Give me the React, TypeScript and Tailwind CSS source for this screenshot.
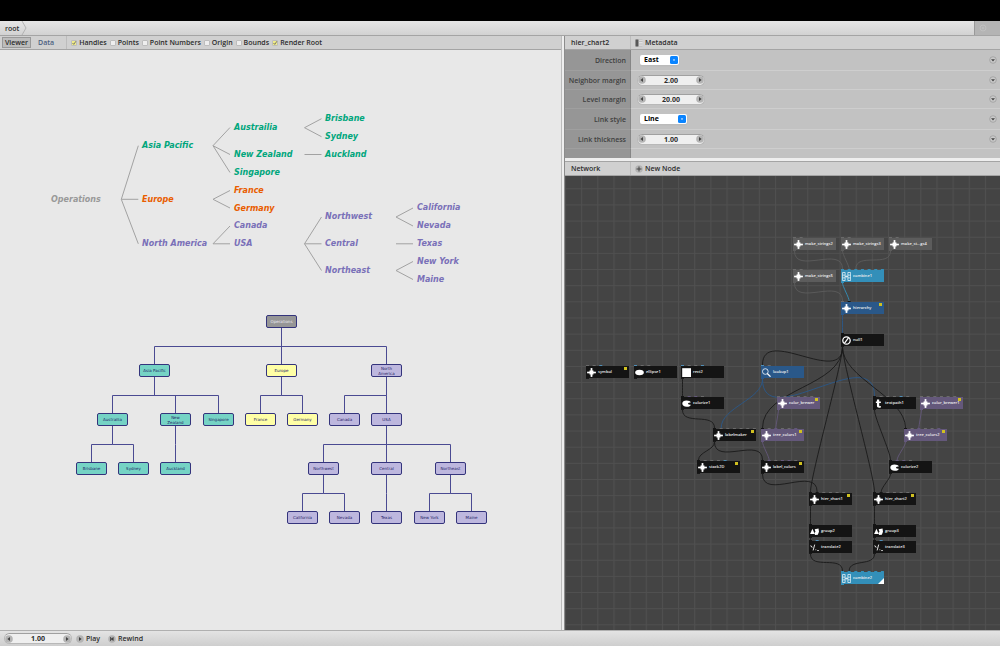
import { useState, type ReactNode } from "react";
import clsx from "clsx";

type Point = [number, number];

/* ---------- Viewer: horizontal hierarchy ---------- */

interface TreeLabel {
  text: string;
  x: number;
  y: number;
  color: string;
}

const GRAY = "text-[#999999]";
const GREEN = "text-[#00a67c]";
const ORANGE = "text-[#e85d00]";
const VIOLET = "text-[#7a70b8]";

const treeLabels: TreeLabel[] = [
  { text: "Operations", x: 51, y: 149, color: GRAY },
  { text: "Asia Pacific", x: 142, y: 95, color: GREEN },
  { text: "Europe", x: 142, y: 149, color: ORANGE },
  { text: "North America", x: 142, y: 193, color: VIOLET },
  { text: "Austrailia", x: 234, y: 77, color: GREEN },
  { text: "New Zealand", x: 234, y: 104, color: GREEN },
  { text: "Singapore", x: 234, y: 122, color: GREEN },
  { text: "France", x: 234, y: 140, color: ORANGE },
  { text: "Germany", x: 234, y: 158, color: ORANGE },
  { text: "Canada", x: 234, y: 175, color: VIOLET },
  { text: "USA", x: 234, y: 193, color: VIOLET },
  { text: "Brisbane", x: 325, y: 68, color: GREEN },
  { text: "Sydney", x: 325, y: 86, color: GREEN },
  { text: "Auckland", x: 325, y: 104, color: GREEN },
  { text: "Northwest", x: 325, y: 166, color: VIOLET },
  { text: "Central", x: 325, y: 193, color: VIOLET },
  { text: "Northeast", x: 325, y: 220, color: VIOLET },
  { text: "California", x: 417, y: 157, color: VIOLET },
  { text: "Nevada", x: 417, y: 175, color: VIOLET },
  { text: "Texas", x: 417, y: 193, color: VIOLET },
  { text: "New York", x: 417, y: 211, color: VIOLET },
  { text: "Maine", x: 417, y: 229, color: VIOLET },
];

const treeForks: { from: Point; to: number[] }[] = [
  { from: [121.3, 149.3], to: [95.7, 149.3, 193.8] },
  { from: [213, 95.7], to: [77.5, 104.5, 122.5] },
  { from: [213, 149.3], to: [140.5, 158] },
  { from: [213, 193.8], to: [176, 193.8] },
  { from: [304.5, 77.7], to: [68.7, 86.7] },
  { from: [304.5, 104.5], to: [104.5] },
  { from: [304.5, 193.8], to: [167, 193.8, 220.5] },
  { from: [396, 167], to: [158, 176] },
  { from: [396, 193.8], to: [193.8] },
  { from: [396, 220.5], to: [211.5, 229.5] },
];

/* ---------- Viewer: org chart ---------- */

interface OrgBox {
  text: string;
  x: number;
  level: number;
  fill: string;
  children?: number[];
}

const ROOT = "bg-[#969696] text-[#ececf4]";
const TEAL = "bg-[#75d3c5] text-[#1e1e66]";
const YELLOW = "bg-[#ffffa6] text-[#1e1e66]";
const LILAC = "bg-[#bdb7de] text-[#1e1e66]";

const orgBoxes: OrgBox[] = [
  { text: "Operations", x: 281, level: 0, fill: ROOT, children: [154, 281, 386] },
  { text: "Asia Pacific", x: 154, level: 1, fill: TEAL, children: [112, 175, 218] },
  { text: "Europe", x: 281, level: 1, fill: YELLOW, children: [260, 302] },
  { text: "North America", x: 386, level: 1, fill: LILAC, children: [344, 386] },
  { text: "Austrailia", x: 112, level: 2, fill: TEAL, children: [91, 133] },
  { text: "New Zealand", x: 175, level: 2, fill: TEAL, children: [175] },
  { text: "Singapore", x: 218, level: 2, fill: TEAL },
  { text: "France", x: 260, level: 2, fill: YELLOW },
  { text: "Germany", x: 302, level: 2, fill: YELLOW },
  { text: "Canada", x: 344, level: 2, fill: LILAC },
  { text: "USA", x: 386, level: 2, fill: LILAC, children: [323, 386, 450] },
  { text: "Brisbane", x: 91, level: 3, fill: TEAL },
  { text: "Sydney", x: 133, level: 3, fill: TEAL },
  { text: "Auckland", x: 175, level: 3, fill: TEAL },
  { text: "Northwest", x: 323, level: 3, fill: LILAC, children: [302, 344] },
  { text: "Central", x: 386, level: 3, fill: LILAC, children: [386] },
  { text: "Northeast", x: 450, level: 3, fill: LILAC, children: [429, 471] },
  { text: "California", x: 302, level: 4, fill: LILAC },
  { text: "Nevada", x: 344, level: 4, fill: LILAC },
  { text: "Texas", x: 386, level: 4, fill: LILAC },
  { text: "New York", x: 429, level: 4, fill: LILAC },
  { text: "Maine", x: 471, level: 4, fill: LILAC },
];

const levelTop = (level: number) => 265 + level * 49;

/* ---------- Network ---------- */

type IconName = "network" | "combine" | "null" | "ellipse" | "rect" | "search" | "colorize" | "text" | "group" | "translate";

interface NetNode {
  id: string;
  label?: string;
  x: number;
  y: number;
  icon: IconName;
  kind: "string" | "list" | "lookup" | "shape" | "color";
  // one letter per input: g = gray, b = blue, v = violet, k = black, c = cyan
  ports: string;
  sub?: boolean;
}

const kindFill: Record<NetNode["kind"], string> = {
  string: "bg-[#5c5c5c]",
  list: "bg-[#338fb9]",
  lookup: "bg-[#2a5889]",
  shape: "bg-[#141414]",
  color: "bg-[#64587b]",
};

const kindStroke: Record<NetNode["kind"], string> = {
  string: "#5c5c5c",
  list: "#338fb9",
  lookup: "#2a5889",
  shape: "#1a1a1a",
  color: "#64587b",
};

const portFill: Record<string, string> = {
  g: "#6a6a6a",
  b: "#4f8db5",
  v: "#64587b",
  k: "#141414",
  c: "#338fb9",
};

const nodes: NetNode[] = [
  { id: "make_strings2", x: 228, y: 62, icon: "network", kind: "string", ports: "gg" },
  { id: "make_strings3", x: 276, y: 62, icon: "network", kind: "string", ports: "gg" },
  { id: "make_strings4", label: "make_st...gs4", x: 324, y: 62, icon: "network", kind: "string", ports: "gg" },
  { id: "make_strings5", x: 228, y: 94, icon: "network", kind: "string", ports: "gg" },
  { id: "combine1", x: 276, y: 94, icon: "combine", kind: "list", ports: "ccccccc" },
  { id: "hierarchy", x: 276, y: 126, icon: "network", kind: "lookup", ports: "gk", sub: true },
  { id: "null1", x: 276, y: 158, icon: "null", kind: "shape", ports: "k" },
  { id: "symbol", x: 21, y: 190, icon: "network", kind: "shape", ports: "ggb", sub: true },
  { id: "ellipse1", x: 69, y: 190, icon: "ellipse", kind: "shape", ports: "bgg" },
  { id: "rect2", x: 116, y: 190, icon: "rect", kind: "shape", ports: "bggb" },
  { id: "lookup1", x: 196, y: 190, icon: "search", kind: "lookup", ports: "bg" },
  { id: "colorize1", x: 116, y: 221, icon: "colorize", kind: "shape", ports: "kvvg" },
  { id: "color_brewer", x: 212, y: 221, icon: "network", kind: "color", ports: "gggggg", sub: true },
  { id: "textpath1", x: 308, y: 221, icon: "text", kind: "shape", ports: "kgggbg" },
  { id: "color_brewer1", x: 355, y: 221, icon: "network", kind: "color", ports: "gggggg", sub: true },
  { id: "labelmaker", x: 148, y: 253, icon: "network", kind: "shape", ports: "kgggggg", sub: true },
  { id: "tree_colors1", x: 196, y: 253, icon: "network", kind: "color", ports: "kgvggv", sub: true },
  { id: "tree_colors2", x: 339, y: 253, icon: "network", kind: "color", ports: "kgvggv", sub: true },
  { id: "stack2D", x: 132, y: 285, icon: "network", kind: "shape", ports: "kgggb", sub: true },
  { id: "label_colors", x: 196, y: 285, icon: "network", kind: "shape", ports: "kvgvvg", sub: true },
  { id: "colorize2", x: 324, y: 285, icon: "colorize", kind: "shape", ports: "kvvg" },
  { id: "hier_chart1", x: 244, y: 317, icon: "network", kind: "shape", ports: "kkgggg", sub: true },
  { id: "hier_chart2", x: 308, y: 317, icon: "network", kind: "shape", ports: "kkgggg", sub: true },
  { id: "group2", x: 244, y: 349, icon: "group", kind: "shape", ports: "k" },
  { id: "group3", x: 308, y: 349, icon: "group", kind: "shape", ports: "k" },
  { id: "translate2", x: 244, y: 365, icon: "translate", kind: "shape", ports: "kb" },
  { id: "translate3", x: 308, y: 365, icon: "translate", kind: "shape", ports: "kb" },
  { id: "combine2", x: 276, y: 396, icon: "combine", kind: "list", ports: "ccccccc" },
];

const links: [string, string, number][] = [
  ["make_strings2", "combine1", 0],
  ["make_strings3", "combine1", 1],
  ["make_strings4", "combine1", 2],
  ["make_strings5", "hierarchy", 0],
  ["combine1", "hierarchy", 1],
  ["hierarchy", "null1", 0],
  ["lookup1", "labelmaker", 1],
  ["lookup1", "textpath1", 0],
  ["null1", "lookup1", 0],
  ["null1", "tree_colors1", 0],
  ["null1", "hier_chart1", 0],
  ["null1", "hier_chart2", 0],
  ["null1", "tree_colors2", 0],
  ["rect2", "colorize1", 0],
  ["colorize1", "labelmaker", 0],
  ["labelmaker", "stack2D", 0],
  ["labelmaker", "label_colors", 0],
  ["color_brewer", "tree_colors1", 2],
  ["tree_colors1", "label_colors", 1],
  ["label_colors", "hier_chart1", 1],
  ["color_brewer1", "tree_colors2", 2],
  ["tree_colors2", "colorize2", 1],
  ["textpath1", "colorize2", 0],
  ["colorize2", "hier_chart2", 1],
  ["hier_chart1", "group2", 0],
  ["hier_chart2", "group3", 0],
  ["group2", "translate2", 0],
  ["group3", "translate3", 0],
  ["translate2", "combine2", 0],
  ["translate3", "combine2", 1],
];

const PORT_STEP = 6.65;
const findNode = (id: string) => nodes.find((n) => n.id === id)!;

function linkPath(from: NetNode, to: NetNode, port: number) {
  const x0 = from.x + 1.5;
  const y0 = from.y + 13;
  const x1 = to.x + 1.5 + port * PORT_STEP;
  const y1 = to.y - 1;
  const half = Math.abs(x1 - x0) / 2;
  return `M${x0} ${y0}C${x0} ${y0 + half} ${x1} ${y1 - half} ${x1} ${y1}`;
}

const iconShapes: Record<IconName, ReactNode> = {
  network: (
    <>
      <rect x="2.4" y="2.4" width="4.4" height="4.4" rx="1.2" />
      <circle cx="4.6" cy="1.1" r="1.1" />
      <circle cx="4.6" cy="8.1" r="1.1" />
      <circle cx="1.1" cy="4.6" r="1.1" />
      <circle cx="8.1" cy="4.6" r="1.1" />
      <path d="M4.2 1h.8v7h-.8zM1 4.2h7V5H1z" />
    </>
  ),
  combine: (
    <g fill="none" stroke="white" strokeWidth=".7">
      <path d="M.6.5h2.6v8.2H.6zM.6 3.2h2.6M.6 6h2.6M6 .5h2.8v8.2H6zM6 3.2h2.8M6 6h2.8M3.2 4.6H6M4.3 3.8l1 .8-1 .8" />
    </g>
  ),
  null: (
    <g fill="none" stroke="white" strokeWidth="1.3">
      <circle cx="4.6" cy="4.6" r="3.8" />
      <path d="M2.6 7.2l4-5.2" />
    </g>
  ),
  ellipse: <ellipse cx="4.6" cy="4.6" rx="4.4" ry="2.7" />,
  rect: <rect x=".2" y=".2" width="9" height="9" />,
  search: (
    <g fill="none" stroke="white">
      <circle cx="3.4" cy="3.6" r="2.9" strokeWidth=".8" />
      <path d="M5.4 5.6l3.3 3.3" strokeWidth="1.2" />
    </g>
  ),
  colorize: (
    <path d="M4.6 1.5C2 1.5.3 2.8.3 4.7S2 8 4.8 8c2.6 0 4.2-1 4.2-2.2L6.8 5.6 6 4.7l1-.9 2-.3C8.6 2.2 6.8 1.5 4.6 1.5z" />
  ),
  text: <path d="M3 .6h2.3v1.9h1.7v1.5H5.3v2.7c0 .7.8.7 1.7.5v1.5C5 9.3 3 9 3 7V4H1.9V2.5H3z" />,
  group: (
    <>
      <path d="M2.5 1.8l2.4 5.4H.1z" />
      <path d="M4.8 2.3l3.9-.8.5 3.4-1.2 3-2.8.3-.8-2 1.2-1.4z" />
    </>
  ),
  translate: (
    <path
      d="M.4 2.9l1 .2.8 1.6M4.8 1.6L3.2 7.6M5.6 6.9h.8M7.4 7.7h1.6"
      fill="none"
      stroke="white"
      strokeWidth=".9"
    />
  ),
};

function NetworkNode({ node }: { node: NetNode }) {
  return (
    <div
      className={clsx("absolute flex h-3 w-[43px] items-center", kindFill[node.kind])}
      style={{ left: node.x, top: node.y }}
    >
      <svg viewBox="0 0 9.2 9.2" className="ml-px h-[9px] w-[9px] shrink-0 fill-white" aria-hidden>
        {iconShapes[node.icon]}
      </svg>
      <span className="ml-0.5 text-[4px] leading-[6px] font-semibold whitespace-nowrap text-[#f0f0f0]">
        {node.label ?? node.id}
      </span>
      {node.sub && <i className="absolute top-px right-0.5 size-[3px] bg-[#d0c020]" />}
      {node.id === "combine2" && (
        <svg viewBox="0 0 6 6" className="absolute right-0 bottom-0 size-[6px] fill-white" aria-hidden>
          <path d="M6 0v6H0z" />
        </svg>
      )}
    </div>
  );
}

function NetworkCanvas() {
  return (
    <div className="relative min-h-0 flex-1 overflow-hidden bg-[#444444]">
      <svg className="absolute inset-0 h-full w-full" aria-hidden>
        <defs>
          <pattern id="grid" x="0" y="12.3" width="16.15" height="16.15" patternUnits="userSpaceOnUse">
            <path d="M0 .5H16.15M.5 0V16.15" fill="none" stroke="#505050" strokeWidth="1" />
          </pattern>
        </defs>
        <rect width="100%" height="100%" fill="url(#grid)" />
        {links.map(([from, to, port]) => (
          <path
            key={from + to}
            d={linkPath(findNode(from), findNode(to), port)}
            fill="none"
            stroke={kindStroke[findNode(from).kind]}
            strokeWidth="0.9"
          />
        ))}
        {nodes.map((n) => (
          <g key={n.id}>
            {n.ports.split("").map((p, i) => (
              <rect key={i} x={n.x + i * PORT_STEP} y={n.y - 1} width="3" height="1" fill={portFill[p]} />
            ))}
            <rect x={n.x} y={n.y + 12} width="3" height="1" fill={kindStroke[n.kind]} />
          </g>
        ))}
      </svg>
      {nodes.map((n) => (
        <NetworkNode key={n.id} node={n} />
      ))}
    </div>
  );
}

/* ---------- Controls ---------- */

function RoundIcon({ d, className }: { d: string; className?: string }) {
  return (
    <svg viewBox="0 0 8 8" className={clsx("size-2 shrink-0", className)} aria-hidden>
      <circle cx="4" cy="4" r="3.8" fill="#b4b4b4" />
      <path d={d} fill="#444" />
    </svg>
  );
}

const ARROW_LEFT = "M2.4 4l2.6-1.9v3.8z";
const ARROW_RIGHT = "M5.6 4L3 2.1v3.8z";

function NumberField({ id, label, value }: { id: string; label: string; value: string }) {
  const [text, setText] = useState(value);
  const step = (delta: number) => setText((Number(text) + delta).toFixed(2));
  return (
    <div className="flex h-[11px] w-[68px] items-center justify-between rounded-full border border-[#b8b8b8] border-t-[#a0a0a0] bg-[#efefef]">
      <button type="button" aria-label={`Decrease ${label}`} onClick={() => step(-1)}>
        <RoundIcon d={ARROW_LEFT} />
      </button>
      <input
        id={id}
        aria-label={label}
        value={text}
        onChange={(e) => setText(e.target.value)}
        className="h-[9px] min-w-0 flex-1 bg-transparent text-center font-bold outline-none"
      />
      <button type="button" aria-label={`Increase ${label}`} onClick={() => step(1)}>
        <RoundIcon d={ARROW_RIGHT} />
      </button>
    </div>
  );
}

function SelectField({ id, options, className }: { id: string; options: string[]; className: string }) {
  return (
    <div className={clsx("relative ml-[3px] h-[10px]", className)}>
      <select
        id={id}
        className="block h-full w-full appearance-none rounded-xs bg-white pl-1 leading-[10px] font-bold text-black shadow-xs outline-none"
      >
        {options.map((o) => (
          <option key={o}>{o}</option>
        ))}
      </select>
      <svg viewBox="0 0 8 8" className="pointer-events-none absolute top-px right-px size-2" aria-hidden>
        <rect width="8" height="8" rx="1.5" fill="#0a84ff" />
        <path d="M2.8 3.5h2.4L4 4.9z" fill="white" />
      </svg>
    </div>
  );
}

function Check({ label, checked = false }: { label: string; checked?: boolean }) {
  return (
    <label className="flex items-center gap-0.5 whitespace-nowrap">
      <span className="relative size-[6px]">
        <input
          type="checkbox"
          defaultChecked={checked}
          className="peer block size-[6px] appearance-none rounded-[1px] border border-[#bdbdbd] bg-[#eeeeee] checked:bg-[#f0ec88]"
        />
        <svg viewBox="0 0 7 7" className="pointer-events-none absolute inset-0 hidden size-[6px] peer-checked:block" aria-hidden>
          <path d="M1.8 3.5l1.4 1.6L5.8 1.4" fill="none" stroke="#666" strokeWidth="1" />
        </svg>
      </span>
      {label}
    </label>
  );
}

const params: { id: string; label: string; control: ReactNode; tall?: boolean }[] = [
  {
    id: "direction",
    label: "Direction",
    tall: true,
    control: <SelectField id="direction" options={["East", "North", "South", "West"]} className="w-[39px]" />,
  },
  { id: "neighbor", label: "Neighbor margin", control: <NumberField id="neighbor" label="Neighbor margin" value="2.00" /> },
  { id: "level", label: "Level margin", control: <NumberField id="level" label="Level margin" value="20.00" /> },
  {
    id: "style",
    label: "Link style",
    tall: true,
    control: <SelectField id="style" options={["Line", "Curve", "Elbow"]} className="w-[47px]" />,
  },
  { id: "thickness", label: "Link thickness", control: <NumberField id="thickness" label="Link thickness" value="1.00" /> },
];

const paneHeader = "flex h-[14px] shrink-0 items-center border-b border-[#a4a4a4] bg-[#d0d0d0]";

function Parameters() {
  return (
    <section>
      <header className={paneHeader}>
        <h2 className="flex h-full w-[66px] items-center border-r border-[#bcbcbc] pl-1.5">hier_chart2</h2>
        <button type="button" className="flex items-center gap-0.5 pl-1">
          <svg viewBox="0 0 8 8" className="size-2" aria-hidden>
            <rect x=".5" y=".5" width="7" height="7" fill="#e2e2e2" />
            <rect x=".5" y=".5" width="3" height="7" fill="#444" />
            <path d="M1.2 2h1.5M1.2 4h1.5M1.2 6h1.5" stroke="#999" strokeWidth=".6" />
            <path d="M3.5 2.5h4M3.5 5h4M3.5.8h4M3.5 7.2h4" stroke="#aaa" strokeWidth=".6" />
          </svg>
          Metadata
        </button>
      </header>
      {params.map((p) => (
        <div key={p.id} className={clsx("flex", p.tall ? "h-[21px]" : "h-[19px]")}>
          <label
            htmlFor={p.id}
            className="flex w-[66px] items-center justify-end border-r border-b border-r-[#868686] border-b-[#9f9f9f] bg-[#969696] pr-1 whitespace-nowrap text-[#404040]"
          >
            {p.label}
          </label>
          <div className="flex flex-1 items-center justify-between border-b border-[#cecece] bg-[#c2c2c2] pr-[3px] pl-1.5">
            {p.control}
            <button type="button" aria-label={`${p.label} menu`}>
              <svg viewBox="0 0 8 8" className="size-2" aria-hidden>
                <circle cx="4" cy="4" r="3.3" fill="#c8c8c8" stroke="#999" strokeWidth=".7" />
                <path d="M2 3.3h4L4 5.6z" fill="#444" />
              </svg>
            </button>
          </div>
        </div>
      ))}
      <div className="flex h-[9px]">
        <div className="w-[66px] border-r border-[#868686] bg-[#969696]" />
        <div className="flex-1 bg-[#c2c2c2]" />
      </div>
    </section>
  );
}

function Viewer() {
  return (
    <div className="relative min-h-0 flex-1 overflow-hidden bg-[#e8e8e8] font-['DejaVu_Sans',sans-serif]">
      <svg className="absolute inset-0 h-full w-full" fill="none" aria-hidden>
        <g stroke="#a2a2a2" strokeWidth="1">
          {treeForks.map(({ from: [x, y], to }) =>
            to.map((end) => <path key={`${x}-${y}-${end}`} d={`M${x} ${y}L${x + 17} ${end}`} />)
          )}
        </g>
        <g stroke="#4a4a92" strokeWidth="1">
          {orgBoxes.map((box) =>
            box.children?.map((cx) => {
              const top = levelTop(box.level) + 13;
              return (
                <path
                  key={`${box.text}-${cx}`}
                  d={`M${box.x + 0.5} ${top}V${top + 18.5}H${cx + 0.5}V${levelTop(box.level + 1)}`}
                />
              );
            })
          )}
        </g>
      </svg>
      {treeLabels.map((l) => (
        <span
          key={l.text}
          className={clsx("absolute -mt-[5px] text-[8px] leading-3 font-bold whitespace-nowrap italic", l.color)}
          style={{ left: l.x, top: l.y }}
        >
          {l.text}
        </span>
      ))}
      {orgBoxes.map((box) => (
        <div
          key={box.text}
          className={clsx(
            "absolute flex h-[13px] w-[31px] items-center justify-center rounded-[2px] border border-[#34347c] px-1 text-center text-[4px] leading-[5px] font-normal",
            box.fill
          )}
          style={{ left: box.x - 15, top: levelTop(box.level) }}
        >
          <span className={clsx(!["North America", "New Zealand"].includes(box.text) && "whitespace-nowrap")}>
            {box.text}
          </span>
        </div>
      ))}
    </div>
  );
}

export default function App() {
  return (
    <div className="flex h-screen min-h-[400px] flex-col bg-[#e8e8e8] font-['Open_Sans',sans-serif] text-[7px] leading-[9px] font-semibold text-[#2c2c2c]">
      <div className="h-[21px] shrink-0 bg-black" />

      {/* Breadcrumb */}
      <nav className="flex h-[15px] shrink-0 items-stretch border-b border-[#a4a4a4] bg-linear-to-b from-[#e6e6e6] to-[#d2d2d2]">
        <a href="#root" className="flex items-center pl-[5px]">root</a>
        <svg viewBox="0 0 6 14" className="ml-0.5 h-[14px] w-[6px]" fill="none" aria-hidden>
          <path d="M1 0l4 7-4 7" stroke="#a8a8a8" strokeWidth=".8" />
        </svg>
        <div className="ml-auto flex w-[26px] items-center border-l border-[#999999] bg-[#b4b4b4] pl-1">
          <svg viewBox="0 0 8 8" className="size-2" fill="none" aria-hidden>
            <circle cx="4" cy="4" r="3" stroke="#c0c0c0" />
            <circle cx="4" cy="4" r="1" fill="#c0c0c0" />
          </svg>
        </div>
      </nav>

      <main className="flex min-h-0 flex-1">
        <section className="flex min-w-0 flex-1 flex-col">
          <header className={paneHeader}>
            <button type="button" className="ml-0.5 h-[11px] border border-[#999999] bg-[#bcbcbc] px-0.5 leading-[9px]">
              Viewer
            </button>
            <button type="button" className="ml-[7px] text-[#4c5f80]">Data</button>
            <div className="ml-3 flex h-full items-center gap-[3px] border-l border-[#bcbcbc] pl-1">
              <Check label="Handles" checked />
              <Check label="Points" />
              <Check label="Point Numbers" />
              <Check label="Origin" />
              <Check label="Bounds" />
              <Check label="Render Root" checked />
            </div>
          </header>
          <Viewer />
        </section>

        <div className="w-1 shrink-0 border-r border-l border-r-[#8c8c8c] border-l-[#bcbcbc] bg-[#eeeeee]" />

        <aside className="flex w-[43.5%] shrink-0 flex-col">
          <Parameters />
          <div className="h-1 shrink-0 border-b border-[#a4a4a4] bg-[#eeeeee]" />
          <header className={paneHeader}>
            <h2 className="flex h-full w-[66px] items-center border-r border-[#bcbcbc] pl-1.5">Network</h2>
            <button type="button" className="flex items-center gap-0.5 pl-1">
              <RoundIcon d="M3.5 1.500h1v2h2v1h-2v2h-1v-2h-2v-1h2z" />
              New Node
            </button>
          </header>
          <NetworkCanvas />
        </aside>
      </main>

      {/* Playback */}
      <footer className="flex h-4 shrink-0 items-center border-t border-[#b0b0b0] bg-linear-to-b from-[#e4e4e4] to-[#cecece] pl-1">
        <NumberField id="frame" label="Frame" value="1.00" />
        <button type="button" className="ml-1 flex items-center gap-0.5">
          <RoundIcon d={ARROW_RIGHT} />
          Play
        </button>
        <button type="button" className="ml-2 flex items-center gap-0.5">
          <RoundIcon d="M2.2 2.1h.9v1.5L5.600 2.100v3.800L3.100 4.400v1.500h-.9z" />
          Rewind
        </button>
      </footer>
    </div>
  );
}
